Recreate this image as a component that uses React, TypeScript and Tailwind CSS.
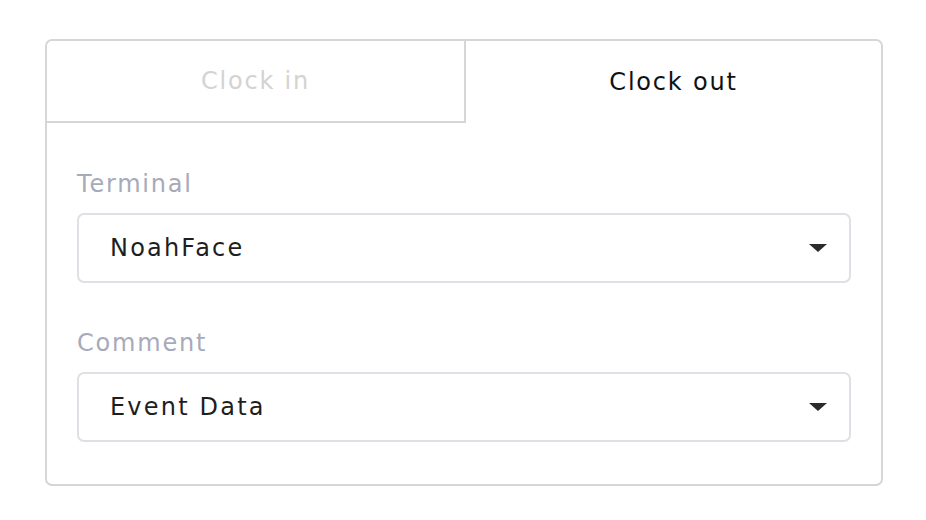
import React from "react";

const font = { fontFamily: '"DejaVu Sans", "Liberation Sans", sans-serif' };

function Caret() {
  return (
    <svg width="18" height="8" viewBox="0 0 18 8" className="shrink-0">
      <path d="M0 0 H18 L9 8 Z" fill="#2b2b2b" />
    </svg>
  );
}

function SelectBox({ value }: { value: string }) {
  return (
    <div className="flex h-[70px] items-center justify-between rounded-[7px] border-2 border-[#dfe0e6] bg-white pl-[31px] pr-[22px]">
      <span className="text-[24px] tracking-[2.2px] text-[#1e1e1e]">{value}</span>
      <Caret />
    </div>
  );
}

export default function App() {
  return (
    <div className="min-h-[520px] w-[926px] bg-white pl-[45px] pt-[39px]" style={font}>
      <div className="w-[838px] overflow-hidden rounded-[7px] border-2 border-[#d6d6d6] bg-white">
        <div className="flex h-[82px]">
          <div className="flex w-[419px] items-center justify-center border-b-2 border-r-2 border-[#d6d6d6] text-[24px] tracking-[1.8px] text-[#d3d3d3]">
            Clock in
          </div>
          <div className="flex flex-1 items-center justify-center text-[24px] tracking-[1.8px] text-[#111]">
            Clock out
          </div>
        </div>
        <div className="flex flex-col px-[30px] pb-[42px] pt-[44px]">
          <div className="mb-[12px] text-[24px] leading-[34px] tracking-[1.8px] text-[#a7aabb]">Terminal</div>
          <SelectBox value="NoahFace" />
          <div className="mb-[12px] mt-[43px] text-[24px] leading-[34px] tracking-[1.8px] text-[#a7aabb]">Comment</div>
          <SelectBox value="Event Data" />
        </div>
      </div>
    </div>
  );
}
